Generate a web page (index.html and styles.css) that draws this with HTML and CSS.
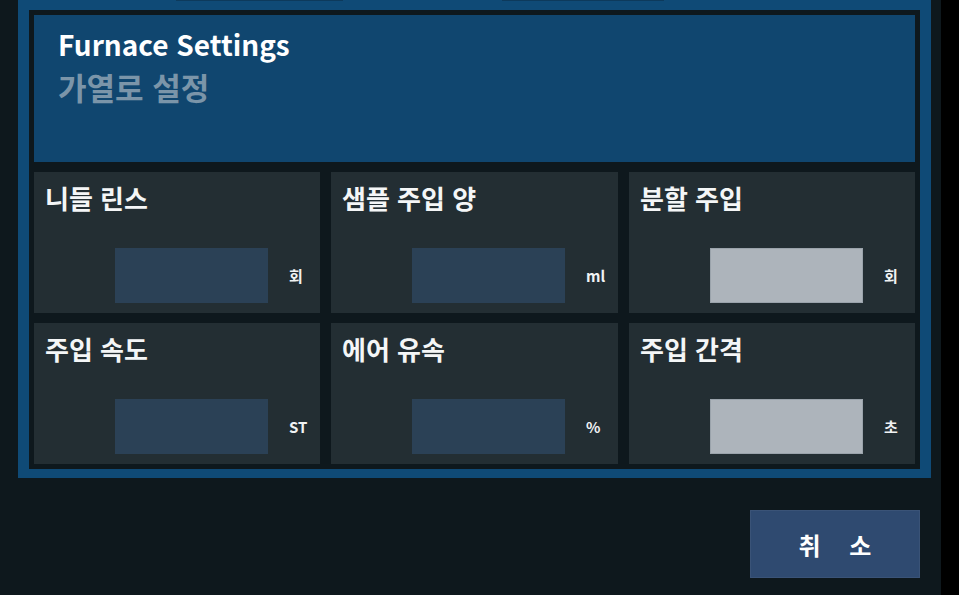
FILE: index.html
```html
<!DOCTYPE html>
<html lang="ko">
<head>
<meta charset="utf-8">
<title>Furnace Settings</title>
<link rel="stylesheet" href="styles.css">
</head>
<body>
<div class="screen">
  <div class="main">
    <div class="panel">
      <div class="tabs-edge">
        <span class="edge edge-a"></span>
        <span class="edge edge-b"></span>
      </div>
      <div class="inner">
        <div class="header">
          <div class="title">Furnace Settings</div>
          <div class="subtitle">가열로 설정</div>
        </div>
        <div class="grid">
          <div class="cell">
            <div class="label">니들 린스</div>
            <div class="field-row"><div class="box"></div><span class="unit">회</span></div>
          </div>
          <div class="cell">
            <div class="label">샘플 주입 양</div>
            <div class="field-row"><div class="box"></div><span class="unit">ml</span></div>
          </div>
          <div class="cell">
            <div class="label">분할 주입</div>
            <div class="field-row"><div class="box box-light"></div><span class="unit">회</span></div>
          </div>
          <div class="cell">
            <div class="label">주입 속도</div>
            <div class="field-row"><div class="box"></div><span class="unit">ST</span></div>
          </div>
          <div class="cell">
            <div class="label">에어 유속</div>
            <div class="field-row"><div class="box"></div><span class="unit">%</span></div>
          </div>
          <div class="cell">
            <div class="label">주입 간격</div>
            <div class="field-row"><div class="box box-light"></div><span class="unit">초</span></div>
          </div>
        </div>
      </div>
    </div>
    <div class="actions">
      <button class="btn-cancel">취 소</button>
    </div>
  </div>
  <div class="sidebar"></div>
</div>
</body>
</html>
```

FILE: styles.css
```css
html, body {
  margin: 0;
  padding: 0;
}
body {
  width: 959px;
  height: 595px;
  overflow: hidden;
  background: #0e181d;
  font-family: "Noto Sans CJK KR", "Noto Sans", sans-serif;
  font-weight: 700;
  color: #ffffff;
}
.screen {
  display: flex;
  width: 959px;
  height: 595px;
}
.main {
  width: 941px;
  height: 595px;
  background: #0e181d;
  padding-left: 18px;
  box-sizing: border-box;
  display: flex;
  flex-direction: column;
}
.sidebar {
  width: 18px;
  height: 595px;
  background: #000000;
}
.panel {
  width: 913px;
  background: #0f4a76;
  padding: 0 11px 9px 11px;
  box-sizing: border-box;
}
.tabs-edge {
  height: 10px;
  position: relative;
}
.edge {
  position: absolute;
  top: 0;
  height: 1px;
  background: #0d3a5c;
}
.edge-a { left: 147px; width: 167px; }
.edge-b { left: 473px; width: 162px; }
.inner {
  background: #0e181d;
  padding: 5px;
  display: flex;
  flex-direction: column;
  gap: 10px;
}
.header {
  height: 147px;
  background: #10466f;
  padding: 8px 0 0 24px;
  box-sizing: border-box;
}
.title {
  font-size: 28px;
  color: #ffffff;
  line-height: 42px;
}
.subtitle {
  font-size: 31px;
  color: #7b95a9;
  line-height: 44px;
}
.grid {
  display: grid;
  grid-template-columns: 286px 287px 286px;
  grid-template-rows: 141px 141px;
  column-gap: 11px;
  row-gap: 10px;
}
.cell {
  background: #232e33;
  display: flex;
  flex-direction: column;
  padding: 7px 0 10px 11px;
  box-sizing: border-box;
}
.label {
  font-size: 26px;
  line-height: 38px;
  color: #f4f6f7;
}
.field-row {
  margin-top: auto;
  display: flex;
  align-items: center;
}
.box {
  width: 153px;
  height: 55px;
  margin-left: 70px;
  background: #2b4156;
}
.box-light {
  background: #adb4bb;
  box-shadow: inset 0 0 0 1px #9aa3ab;
}
.unit {
  margin-left: 21px;
  font-size: 15px;
  color: #f0f2f3;
}
.actions {
  display: flex;
  justify-content: flex-end;
  padding: 32px 21px 0 0;
}
.btn-cancel {
  width: 170px;
  height: 68px;
  background: #2f4a70;
  border: 1px solid #3a5377;
  color: #ffffff;
  font-family: "Noto Sans CJK KR", "Noto Sans", sans-serif;
  font-weight: 700;
  font-size: 24px;
  word-spacing: 22px;
  padding: 0;
  box-sizing: border-box;
}
```
